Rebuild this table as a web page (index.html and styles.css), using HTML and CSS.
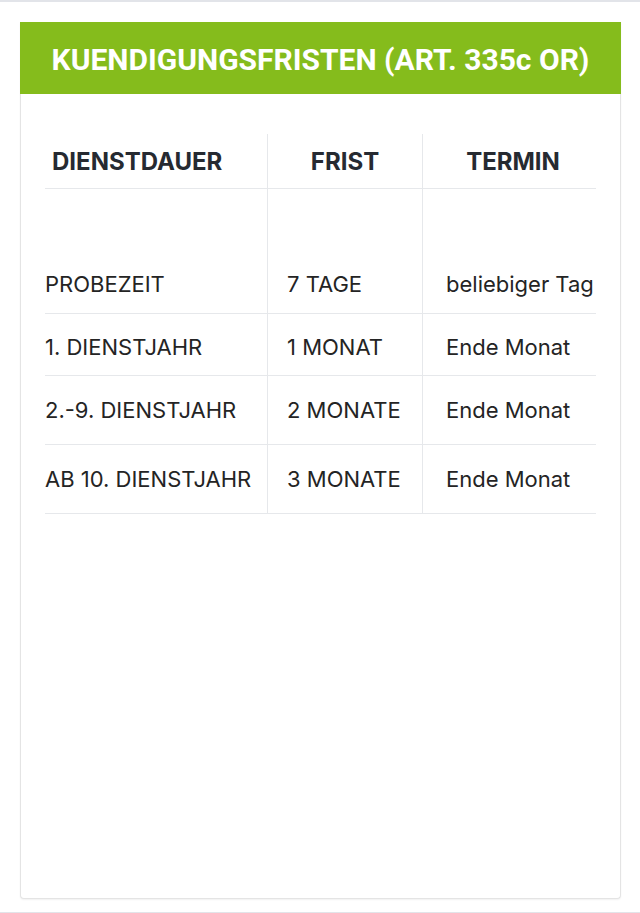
FILE: index.html
```html
<!DOCTYPE html>
<html lang="de">
<head>
    <meta charset="UTF-8">
    <meta name="viewport" content="width=device-width, initial-scale=1.0">
    <title>Kündigungsfristen</title>
    <link rel="stylesheet" href="styles.css">
</head>
<body>
    <div class="page">
        <div class="card">
            <h2 class="card-title">KUENDIGUNGSFRISTEN (ART. 335c OR)</h2>

            <div class="card-body">
                <table class="fristen">
                    <thead>
                        <tr>
                            <th class="col-dauer">DIENSTDAUER</th>
                            <th class="col-frist">FRIST</th>
                            <th class="col-termin">TERMIN</th>
                        </tr>
                    </thead>
                    <tbody>
                        <!-- leere Zeile -->
                        <tr class="spacer">
                            <td></td>
                            <td></td>
                            <td></td>
                        </tr>
                        <tr class="short">
                            <td>PROBEZEIT</td>
                            <td>7 TAGE</td>
                            <td>beliebiger Tag</td>
                        </tr>
                        <tr class="short">
                            <td>1. DIENSTJAHR</td>
                            <td>1 MONAT</td>
                            <td>Ende Monat</td>
                        </tr>
                        <tr>
                            <td>2.-9. DIENSTJAHR</td>
                            <td>2 MONATE</td>
                            <td>Ende Monat</td>
                        </tr>
                        <tr>
                            <td>AB 10. DIENSTJAHR</td>
                            <td>3 MONATE</td>
                            <td>Ende Monat</td>
                        </tr>
                    </tbody>
                </table>
            </div>
        </div>
    </div>
</body>
</html>
```

FILE: styles.css
```css
body {
    margin: 0;
    font-family: Inter, "Noto Sans", sans-serif;
    background-color: #fff;
    color: #222;
}
.page {
    box-sizing: border-box;
    height: 913px;
    border-top: 2px solid #e2e4e9;
    border-bottom: 1px solid #e2e4e9;
    padding: 20px 20px 0;
}
.card {
    box-sizing: border-box;
    width: 601px;
    height: 877px;
    border: 1px solid #e4e4e4;
    border-top: none;
    border-radius: 0 0 4px 4px;
    box-shadow: 0 1px 2px rgba(0, 0, 0, 0.06);
    background-color: #fff;
}
.card-title {
    box-sizing: border-box;
    margin: 0 -1px;
    height: 72px;
    padding-top: 3px;
    line-height: 69px;
    background-color: #85bc1c;
    color: #fff;
    text-align: center;
    font-family: Roboto, "Liberation Sans", sans-serif;
    font-weight: bold;
    font-size: 30px;
    white-space: nowrap;
}
.card-body {
    padding: 40px 23px 0 24px;
}
.fristen {
    width: 551px;
    border-collapse: collapse;
    table-layout: fixed;
}
.fristen th {
    height: 54px;
    padding: 0;
    font-size: 24px;
    font-weight: bold;
    color: #262a31;
    border-bottom: 1px solid #e6e8eb;
}
.fristen th + th,
.fristen td + td {
    border-left: 1px solid #e6e8eb;
}
.col-dauer {
    width: 215px;
    text-align: left;
    padding-left: 7px !important;
}
.col-frist {
    width: 154px;
    text-align: center;
}
.col-termin {
    text-align: center;
    padding-left: 7px !important;
}
.fristen td {
    height: 68px;
    padding: 0;
    font-size: 22px;
    color: #242424;
    border-bottom: 1px solid #e6e8eb;
    white-space: nowrap;
}
.fristen tr.short td {
    box-sizing: border-box;
    height: 62px;
    padding-top: 5px;
}
.fristen tr.spacer td {
    height: 62px;
    border-bottom: none;
}
.fristen td:nth-child(2) {
    padding-left: 19px;
}
.fristen td:nth-child(3) {
    padding-left: 23px;
}
```
